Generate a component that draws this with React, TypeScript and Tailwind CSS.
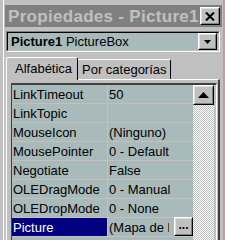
import React from "react";

const rows: { name: string; value: string; selected?: boolean }[] = [
  { name: "LinkTimeout", value: "50" },
  { name: "LinkTopic", value: "" },
  { name: "MouseIcon", value: "(Ninguno)" },
  { name: "MousePointer", value: "0 - Default" },
  { name: "Negotiate", value: "False" },
  { name: "OLEDragMode", value: "0 - Manual" },
  { name: "OLEDropMode", value: "0 - None" },
  { name: "Picture", value: "(Mapa de bits)", selected: true },
];

function Raised({ className, children }: { className: string; children?: React.ReactNode }) {
  return (
    <div className={"bg-[#c0c0c0] border border-t-white border-l-white border-r-black border-b-black " + className}>
      <div className="w-full h-full border border-t-[#dfdfdf] border-l-[#dfdfdf] border-r-[#808080] border-b-[#808080] flex items-center justify-center">
        {children}
      </div>
    </div>
  );
}

export default function App() {
  return (
    <div className="w-[225px] h-[240px] bg-[#c0c0c0] overflow-hidden flex font-['Liberation_Sans',Arial,sans-serif] text-black">
      <div className="w-[3px] shrink-0" />
      <div className="flex-1 border-l border-white flex flex-col pt-[5px] pl-[1px] min-w-0">
        {/* Title bar */}
        <div className="h-[22px] bg-[#808080] flex items-center pl-[3px] shrink-0">
          <span className="font-bold text-[17px] tracking-[0.3px] leading-none text-[#c0c0c0] whitespace-nowrap">Propiedades - Picture1</span>
          <Raised className="ml-auto mr-[2px] w-[20px] h-[18px] shrink-0">
            <svg width="10" height="9" viewBox="0 0 10 9">
              <path d="M1 0.5 L9 8.5 M9 0.5 L1 8.5" stroke="black" strokeWidth="2" />
            </svg>
          </Raised>
        </div>
        {/* Object dropdown */}
        <div className="mt-[4px] ml-[1px] mr-[2px] h-[21px] shrink-0 border border-t-[#808080] border-l-[#808080] border-r-white border-b-white">
          <div className="w-full h-full border border-t-black border-l-black border-r-[#c0c0c0] border-b-[#c0c0c0] bg-[#a9baba] flex items-center">
            <span className="pl-[3px] text-[13px] leading-none whitespace-nowrap">
              <span className="font-bold">Picture1</span> PictureBox
            </span>
            <Raised className="ml-auto mr-[1px] w-[19px] h-[17px] shrink-0">
              <svg width="7" height="4" viewBox="0 0 7 4">
                <path d="M0 0 H7 L3.5 4 Z" fill="black" />
              </svg>
            </Raised>
          </div>
        </div>
        {/* Tabs */}
        <div className="mt-[5px] h-[22px] flex items-end pl-[1px] shrink-0">
          <div className="relative z-10 -mb-[1px] w-[72px] h-[23px] bg-[#c0c0c0] border-t border-l border-white border-r border-r-black rounded-t-[2px] flex items-start pt-[3px] pl-[8px]">
            <span className="text-[13px] leading-[15px] whitespace-nowrap">Alfabética</span>
          </div>
          <div className="w-[93px] h-[20px] bg-[#c0c0c0] border-t border-white border-r border-r-black rounded-tr-[2px] flex items-start pt-[2px] pl-[4px]">
            <span className="text-[13px] leading-[15px] whitespace-nowrap">Por categorías</span>
          </div>
        </div>
        {/* Panel */}
        <div className="flex-1 ml-[1px] mr-[2px] border-t border-l border-white border-r-2 border-r-[#404040] pt-[3px] pl-[4px] pr-[1px] flex flex-col min-h-0">
          <div className="flex-1 flex border-t-2 border-l border-t-[#404040] border-l-[#404040] border-r border-r-white min-h-0">
            <div className="w-[181px] flex flex-col shrink-0">
              {rows.map((r) => (
                <div key={r.name} className="h-[19px] flex shrink-0 border-b border-[#c8bebe]">
                  <div
                    className={
                      "w-[96px] shrink-0 border-r border-[#c8bebe] flex items-center pl-[1px] text-[13px] leading-none whitespace-nowrap " +
                      (r.selected ? "bg-[#000080] text-white" : "bg-[#a9baba]")
                    }
                  >
                    {r.name}
                  </div>
                  <div className="flex-1 bg-[#a9baba] flex items-center min-w-0">
                    <div className={"flex-1 min-w-0 overflow-hidden " + (r.selected ? "mr-[5px]" : "")}>
                      <span className="block pl-[1px] text-[13px] leading-[15px] whitespace-nowrap overflow-hidden text-clip">{r.value}</span>
                    </div>
                    {r.selected && (
                      <Raised className="w-[19px] h-[19px] shrink-0 -mt-[1px]">
                        <span className="text-[12px] font-bold leading-none -mt-[4px]">...</span>
                      </Raised>
                    )}
                  </div>
                </div>
              ))}
              <div className="flex-1 bg-[#a9baba]" />
            </div>
            <div className="w-[21px] shrink-0 flex flex-col">
              <Raised className="w-[21px] h-[20px] shrink-0">
                <svg width="11" height="6" viewBox="0 0 11 6">
                  <path d="M0 6 H11 L5.5 0 Z" fill="black" />
                </svg>
              </Raised>
              <div className="flex-1 bg-[repeating-conic-gradient(#ffffff_0_25%,#c0c0c0_0_50%)] bg-[length:2px_2px]" />
            </div>
          </div>
        </div>
      </div>
      <div className="w-[3px] shrink-0 border-r-2 border-[#d89494]" />
    </div>
  );
}
